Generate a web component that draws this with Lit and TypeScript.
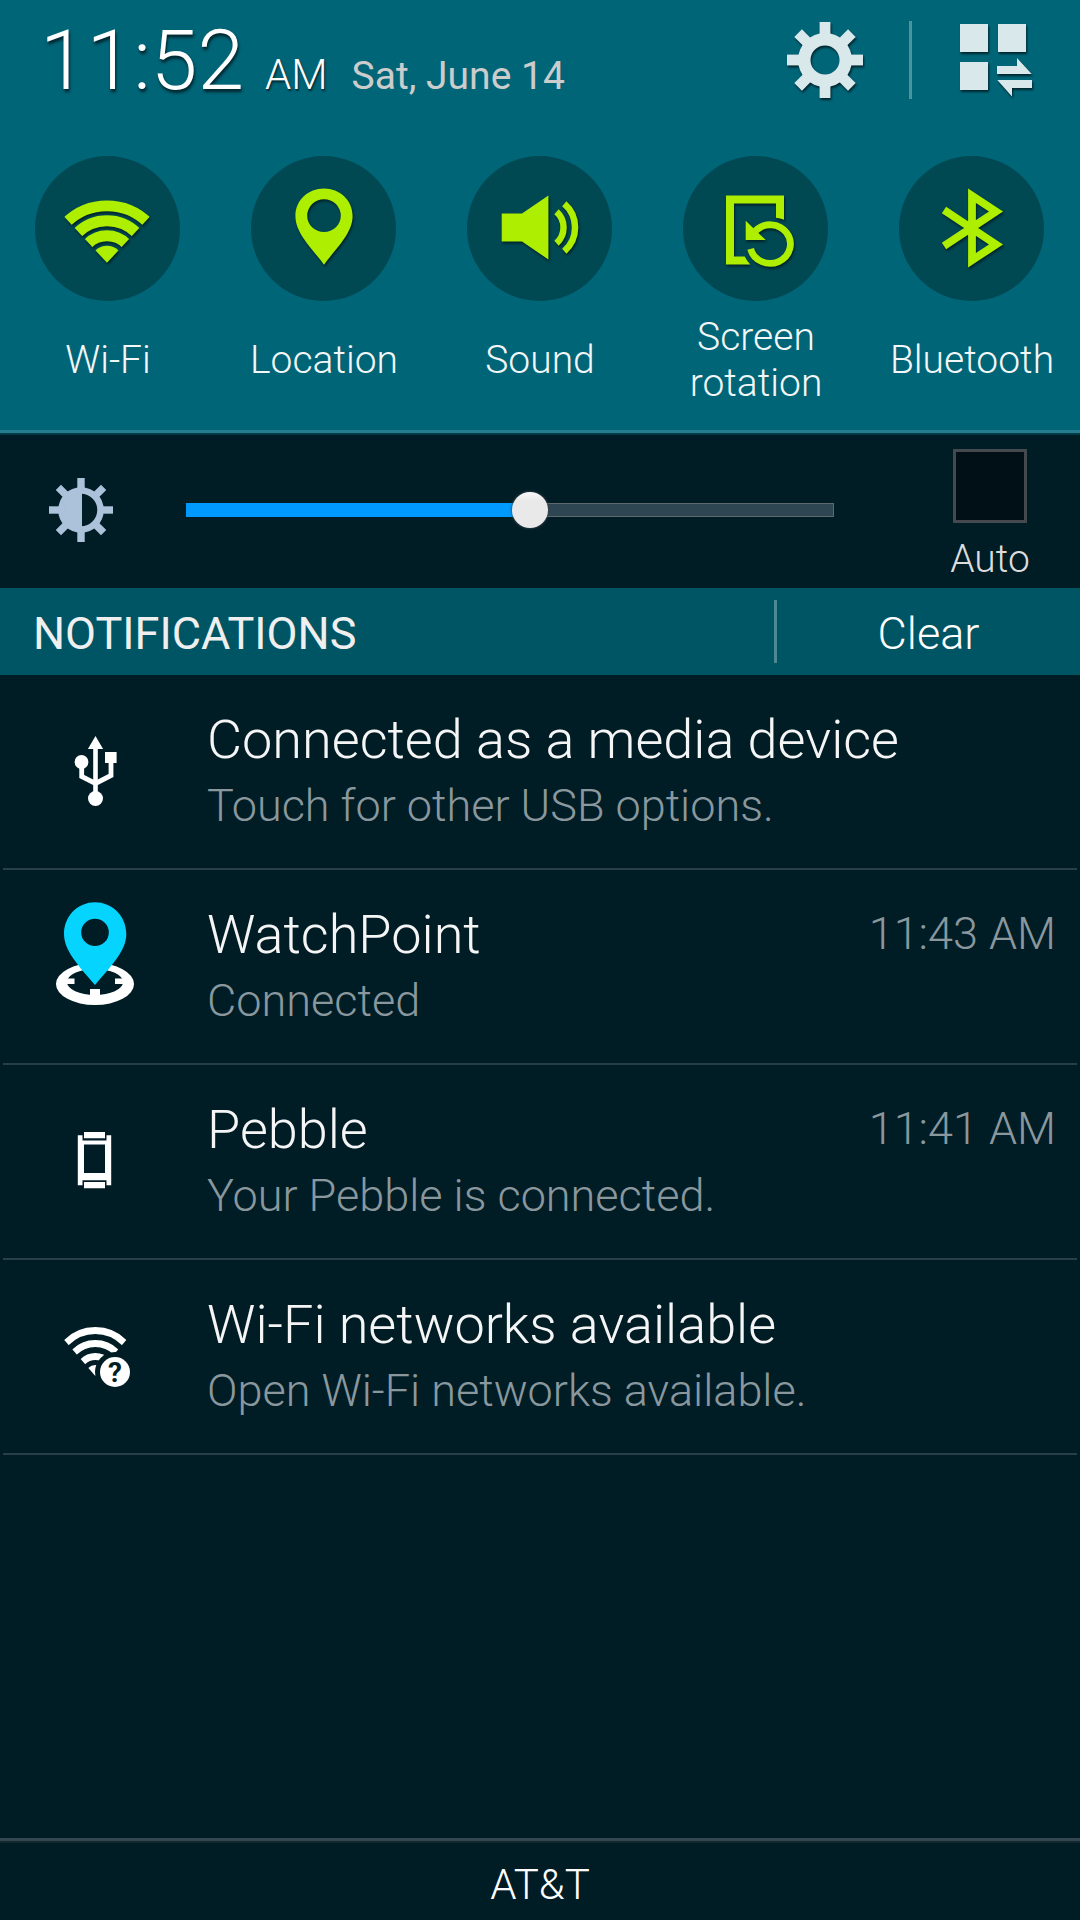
import { LitElement, html, svg, css, type SVGTemplateResult } from "lit";
import { customElement, property, state } from "lit/decorators.js";

interface Toggle {
  id: string;
  label: string;
  icon: SVGTemplateResult;
}

interface Notice {
  title: string;
  text: string;
  time?: string;
  icon: SVGTemplateResult;
}

const TOGGLES: Toggle[] = [
  {
    id: "wifi",
    label: "Wi-Fi",
    icon: svg`
      <clipPath id="wedge"><path d="M45 79.8 L-4 27 L-4 0 L94 0 L94 27 Z" /></clipPath>
      <g clip-path="url(#wedge)">
        <circle cx="45" cy="81" r="58.2" fill="none" stroke="currentColor" stroke-width="10.8" />
        <circle cx="45" cy="80" r="42.2" fill="none" stroke="currentColor" stroke-width="11" />
        <circle cx="45" cy="80" r="27.2" fill="none" stroke="currentColor" stroke-width="11" />
        <circle cx="45" cy="79.5" r="16.7" fill="currentColor" />
      </g>`,
  },
  {
    id: "location",
    label: "Location",
    icon: svg`<path fill="currentColor" fill-rule="evenodd"
      d="M46 5.5 C30.3 5.5 17.4 17 17.4 33 C17.4 51 35 66 46 81.8 C57 66 74.6 51 74.6 33 C74.6 17 61.7 5.5 46 5.5 Z
         M46 16.3 A16.8 16.4 0 1 1 46 49.1 A16.8 16.4 0 1 1 46 16.3 Z" />`,
  },
  {
    id: "sound",
    label: "Sound",
    icon: svg`
      <path fill="currentColor" d="M7.7 30.5 H28 L54.4 12.5 V76.5 L28 58.5 H7.7 Z" />
      <g fill="none" stroke="currentColor" stroke-width="6.5">
        <path d="M62.5 28.8 A21 21 0 0 1 62.5 60.2" />
        <path d="M70.3 20.8 A31.5 31.5 0 0 1 70.3 68.2" />
      </g>`,
  },
  {
    id: "rotation",
    label: "Screen rotation",
    icon: svg`
      <path fill="currentColor"
        d="M16 12.5 H74 V36.7 Q70 35 66 34.7 V20.5 H24 V73.5 H34.7 Q37 78 40.3 81.5 H16 Z" />
      <path fill="none" stroke="currentColor" stroke-width="6.8"
        d="M40.6 65.8 A20.2 19.3 0 1 0 45.5 47.8" />
      <path fill="currentColor" d="M35.7 37.7 V57 H55.7 Z" />`,
  },
  {
    id: "bluetooth",
    label: "Bluetooth",
    icon: svg`<path fill="none" stroke="currentColor" stroke-width="7.8"
      d="M18 27 L70 61.4 L46 77.3 V12.7 L70 28.6 L18 63" />`,
  },
];

const NOTICES: Notice[] = [
  {
    title: "Connected as a media device",
    text: "Touch for other USB options.",
    icon: svg`
      <g transform="translate(.5 0)">
        <path fill="#fff" d="M63 29 L70.6 42 H65.3 V92 H60.7 V42 H55.4 Z" />
        <path fill="none" stroke="#fff" stroke-width="4.8" d="M49.2 55 V69.5 L63 76.5 L78.5 68.5 V54" />
        <circle cx="49" cy="55" r="6.9" fill="#fff" />
        <rect x="72.5" y="45" width="11.6" height="11" fill="#fff" />
        <circle cx="63" cy="91.5" r="7.5" fill="#fff" />
      </g>`,
  },
  {
    title: "WatchPoint",
    text: "Connected",
    time: "11:43 AM",
    icon: svg`
      <path fill="#fff" fill-rule="evenodd"
        d="M63 61 A39 21 0 1 1 63 103 A39 21 0 1 1 63 61 Z
           M63 67 A28 13 0 1 0 63 93 A28 13 0 1 0 63 67 Z" />
      <path fill="#fff" d="M33 76.5 H42.5 V82 H33 Z M83 76.5 H93 V82 H83 Z M58 87 H68 V95 H58 Z" />
      <path fill="#05d4ff" fill-rule="evenodd"
        d="M63 .3 C46 .3 32 14 32 32 C32 49 47 64 63 83 C79 64 94.3 49 94.3 32 C94.3 14 80 .3 63 .3 Z
           M63 16.8 A13.8 13.6 0 1 1 63 44 A13.8 13.6 0 1 1 63 16.8 Z" />`,
  },
  {
    title: "Pebble",
    text: "Your Pebble is connected.",
    time: "11:41 AM",
    icon: svg`<path fill="#fff" fill-rule="evenodd"
      d="M52 35 H73 V41.3 H52 Z M52 85 H73 V91.3 H52 Z
         M45.8 38.3 H50.5 V43.5 H74.5 V38.3 H79.2 V88.3 H74.5 V83.3 H50.5 V88.3 H45.8 Z
         M52 47.5 V76 H73 V47.5 Z" />`,
  },
  {
    title: "Wi-Fi networks available",
    text: "Open Wi-Fi networks available.",
    icon: svg`
      <clipPath id="sector"><path d="M63.3 84 L20 33.7 V20 H106.6 V33.7 Z" /></clipPath>
      <mask id="badge">
        <rect width="128" height="128" fill="#fff" />
        <circle cx="83" cy="80" r="20" fill="#000" />
      </mask>
      <g mask="url(#badge)">
        <g clip-path="url(#sector)" fill="none" stroke="#fff">
          <circle cx="63.3" cy="79" r="40.5" stroke-width="7" />
          <circle cx="63.3" cy="81" r="29.5" stroke-width="7" />
          <circle cx="63.3" cy="82" r="17.5" stroke-width="7" />
          <circle cx="63.3" cy="83" r="10" fill="#fff" stroke="none" />
        </g>
      </g>
      <circle cx="83" cy="80" r="15" fill="#fff" />
      <text class="mark" x="83" y="90" text-anchor="middle">?</text>`,
  },
];

const TEETH = [0, 45, 90, 135, 180, 225, 270, 315];

@customElement("quick-toggle")
export class QuickToggle extends LitElement {
  static styles = css`
    :host {
      display: block;
      min-width: 0;
    }
    .toggle {
      display: flex;
      flex-direction: column;
      align-items: center;
      gap: 13px;
      width: 100%;
      padding: 0;
      border: 0;
      background: none;
      font: 300 39px/46px Roboto, sans-serif;
      color: #f3f7f8;
      cursor: pointer;
    }
    .disc {
      display: grid;
      place-items: center;
      width: 145px;
      height: 145px;
      margin-right: 1px;
      border-radius: 50%;
      background: #004852;
      color: #6f9097;
    }
    .toggle[aria-pressed="true"] .disc {
      color: #aeee00;
    }
    .glyph {
      width: 90px;
      height: 90px;
      margin: 0 1px 1px 0;
      overflow: visible;
      filter: drop-shadow(1px 2px 1px rgba(0, 20, 26, 0.7));
    }
    .label {
      display: flex;
      align-items: center;
      justify-content: center;
      min-height: 92px;
      max-width: 180px;
      text-align: center;
    }
  `;

  @property({ attribute: false }) item!: Toggle;
  @state() private on = true;

  render() {
    return html`
      <button class="toggle" aria-pressed=${this.on} @click=${() => (this.on = !this.on)}>
        <span class="disc">
          <svg class="glyph" viewBox="0 0 90 90" aria-hidden="true">${this.item.icon}</svg>
        </span>
        <span class="label">${this.item.label}</span>
      </button>
    `;
  }
}

@customElement("notice-row")
export class NoticeRow extends LitElement {
  static styles = css`
    :host {
      display: block;
    }
    .row {
      display: grid;
      grid-template-columns: 186px 1fr auto;
      align-items: start;
      min-height: 193px;
      margin: 0 3px;
      border-bottom: 2px solid #293f47;
      font-family: Roboto, sans-serif;
      font-weight: 300;
    }
    .icon {
      width: 128px;
      height: 128px;
      margin: 32px 29px 0;
    }
    .mark {
      font: 700 28px Roboto, sans-serif;
      fill: #001d26;
    }
    .body {
      display: grid;
      gap: 7px;
      padding: 33px 0 0 18px;
    }
    .title {
      margin: 0;
      font-size: 54px;
      line-height: 64px;
      font-weight: 300;
      color: #f5f5f5;
    }
    .text {
      margin: 0;
      font-size: 45px;
      line-height: 54px;
      color: #8a989e;
    }
    .time {
      padding: 37px 21px 0 0;
      font-size: 45px;
      line-height: 54px;
      color: #8a989e;
    }
  `;

  @property({ attribute: false }) item!: Notice;

  render() {
    const { title, text, time, icon } = this.item;
    return html`
      <article class="row">
        <svg class="icon" viewBox="0 0 128 128" aria-hidden="true">${icon}</svg>
        <div class="body">
          <h3 class="title">${title}</h3>
          <p class="text">${text}</p>
        </div>
        ${time ? html`<time class="time">${time}</time>` : null}
      </article>
    `;
  }
}

@customElement("app-root")
export class AppRoot extends LitElement {
  static styles = css`
    :host {
      display: block;
      font-family: Roboto, sans-serif;
      font-weight: 300;
    }
    .shade {
      display: flex;
      flex-direction: column;
      min-height: 100vh;
      background: #001d26;
      color: #fff;
    }
    .top {
      background: #006577;
      border-bottom: 3px solid #257d8f;
    }
    .status {
      display: flex;
      align-items: center;
      gap: 45px;
      padding: 10px 45px 0 40px;
    }
    .clock {
      display: flex;
      align-items: baseline;
      flex: 1;
      padding-top: 2px;
      white-space: nowrap;
    }
    .time {
      font-size: 84px;
      line-height: 98px;
      text-shadow: 1px 3px 3px rgba(0, 20, 26, 0.8);
    }
    .meridiem {
      margin-left: 21px;
      font-size: 42px;
      text-shadow: 1px 2px 2px rgba(0, 20, 26, 0.8);
    }
    .date {
      margin-left: 24px;
      font-size: 39px;
      font-weight: 400;
      color: #ccc;
    }
    .tool {
      display: block;
      padding: 0;
      border: 0;
      background: none;
      color: #d9e8eb;
      cursor: pointer;
    }
    .tool-icon {
      display: block;
      width: 78px;
      height: 78px;
      overflow: visible;
      filter: drop-shadow(1px 2px 1px rgba(0, 20, 26, 0.8));
    }
    .rule {
      width: 3px;
      height: 78px;
      background: #4d93a0;
    }
    .toggles {
      display: grid;
      grid-template-columns: repeat(5, 1fr);
      padding: 46px 0 24px;
    }
    .brightness {
      display: flex;
      align-items: flex-start;
      height: 153px;
      border-top: 2px solid #003b46;
      box-sizing: content-box;
    }
    .sun {
      width: 66px;
      height: 66px;
      margin: 42px 72px 0 48px;
      color: #acc2da;
    }
    .slider {
      --fill: 50%;
      flex: 1;
      min-width: 0;
      height: 38px;
      margin: 56px 0 0;
      appearance: none;
      background: none;
      cursor: pointer;
    }
    .slider::-webkit-slider-runnable-track {
      height: 14px;
      background:
        linear-gradient(#009aff, #009aff) 0 0 / var(--fill) 100% no-repeat,
        linear-gradient(#2e4651, #2e4651) 0 1px / calc(100% - 1px) calc(100% - 2px) no-repeat,
        #5f696e;
    }
    .slider::-webkit-slider-thumb {
      appearance: none;
      width: 36px;
      height: 36px;
      margin-top: -11px;
      border-radius: 50%;
      background: linear-gradient(#fafafa, #e9e9e9 25%);
      box-shadow: 0 0 2px 1px rgba(60, 70, 76, 0.7);
    }
    .auto {
      display: flex;
      flex-direction: column;
      align-items: center;
      gap: 13px;
      width: 180px;
      margin: 14px 0 0 66px;
      font-size: 39px;
      line-height: 46px;
      color: #dcdcdc;
      cursor: pointer;
    }
    .auto-box {
      appearance: none;
      box-sizing: border-box;
      width: 74px;
      height: 74px;
      margin: 0;
      border: 3px solid #43494c;
      background: #001016;
    }
    .auto-box:checked {
      background: #009aff;
    }
    .bar {
      display: flex;
      align-items: center;
      height: 87px;
      background: #005564;
    }
    .heading {
      flex: 1;
      margin: 0;
      padding: 4px 0 0 33px;
      font-size: 45px;
      line-height: 54px;
      font-weight: 400;
      color: #efefef;
    }
    .bar-rule {
      width: 3px;
      height: 63px;
      background: #4d8893;
    }
    .clear {
      width: 303px;
      padding: 4px 0 0;
      border: 0;
      background: none;
      font: 300 45px/54px Roboto, sans-serif;
      color: #fff;
      cursor: pointer;
    }
    .list {
      flex: 1;
    }
    .carrier {
      border-top: 3px solid #32474f;
      box-shadow: inset 0 2px #12282e;
      padding: 20px 0 11px;
      font-size: 42px;
      line-height: 48px;
      text-align: center;
    }
  `;

  @state() private level = 136;
  @state() private auto = false;
  @state() private notices = NOTICES;

  private onLevel(e: Event) {
    this.level = Number((e.target as HTMLInputElement).value);
  }

  render() {
    const fill = `--fill: ${(this.level / 255) * 100}%`;
    return html`
      <main class="shade">
        <header class="top">
          <div class="status">
            <div class="clock">
              <span class="time">11:52</span>
              <span class="meridiem">AM</span>
              <span class="date">Sat, June 14</span>
            </div>
            <button class="tool" aria-label="Settings">
              <svg class="tool-icon" viewBox="0 0 78 78" aria-hidden="true">
                <path fill="currentColor" fill-rule="evenodd"
                  d="M39 12 A27 27 0 1 1 39 66 A27 27 0 1 1 39 12 Z
                     M39 24.5 A14.5 14.5 0 1 0 39 53.5 A14.5 14.5 0 1 0 39 24.5 Z" />
                ${TEETH.map(
                  (a) => svg`<rect x="33.6" y="1" width="10.8" height="14" fill="currentColor"
                    transform="rotate(${a} 39 39)" />`
                )}
              </svg>
            </button>
            <span class="rule"></span>
            <button class="tool" aria-label="Edit quick settings">
              <svg class="tool-icon" viewBox="0 0 78 78" aria-hidden="true">
                <path fill="currentColor"
                  d="M3 3 H31 V31 H3 Z M41 3 H69 V31 H41 Z M3 41 H31 V69 H3 Z
                     M40 45 H60 V37 L74.7 53 H40 Z M40.3 59 H75 V67 H55 V75.5 Z" />
              </svg>
            </button>
          </div>
          <nav class="toggles" aria-label="Quick settings">
            ${TOGGLES.map((t) => html`<quick-toggle .item=${t}></quick-toggle>`)}
          </nav>
        </header>

        <section class="brightness" aria-label="Brightness">
          <svg class="sun" viewBox="0 0 66 66" aria-hidden="true">
            <circle cx="33" cy="33" r="19.5" fill="none" stroke="currentColor" stroke-width="6.5" />
            <path fill="currentColor" d="M34 15 V51 A18 18 0 0 1 34 15 Z" />
            ${TEETH.map(
              (a) => svg`<rect x="29.3" y="1" width="7.4" height="11" fill="currentColor"
                transform="rotate(${a} 33 33)" />`
            )}
          </svg>
          <input class="slider" type="range" min="0" max="255" aria-label="Brightness level"
            style=${fill} .value=${String(this.level)} @input=${this.onLevel} />
          <label class="auto">
            <input class="auto-box" type="checkbox" .checked=${this.auto}
              @change=${() => (this.auto = !this.auto)} />
            Auto
          </label>
        </section>

        <div class="bar">
          <h2 class="heading">NOTIFICATIONS</h2>
          <span class="bar-rule"></span>
          <button class="clear" @click=${() => (this.notices = [])}>Clear</button>
        </div>

        <section class="list">
          ${this.notices.map((n) => html`<notice-row .item=${n}></notice-row>`)}
        </section>

        <footer class="carrier">AT&amp;T</footer>
      </main>
    `;
  }
}
